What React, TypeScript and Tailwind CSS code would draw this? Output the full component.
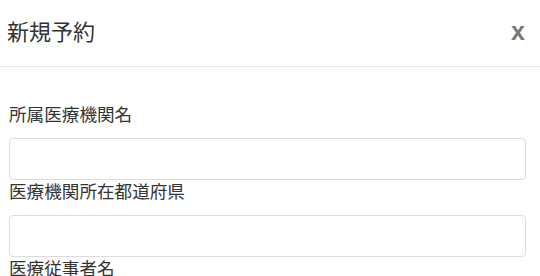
const fields = ["所属医療機関名", "医療機関所在都道府県", "医療従事者名"];

export default function App() {
  return (
    <div
      className="w-[540px] h-[276px] overflow-hidden bg-white text-[#333]"
      style={{ fontFamily: '"Liberation Sans", "Noto Sans CJK JP", sans-serif' }}
    >
      <div className="flex items-center justify-between h-[67px] pl-[7px] pr-[15px] border-b border-[#e5e5e5]">
        <h2 className="text-[22px] leading-[30px] font-normal">新規予約</h2>
        <button className="text-[25px] leading-none font-bold text-[#7a7a7a] pb-[3px]">x</button>
      </div>
      <div className="pt-[36px] pl-[9px] pr-[14px]">
        {fields.map((label) => (
          <div key={label}>
            <label className="block text-[17.6px] leading-[24px] mb-[11px]">{label}</label>
            <input
              type="text"
              className="block w-full h-[42px] border border-[#dcdcdc] rounded-[4px] px-3 outline-none"
            />
          </div>
        ))}
      </div>
    </div>
  );
}
